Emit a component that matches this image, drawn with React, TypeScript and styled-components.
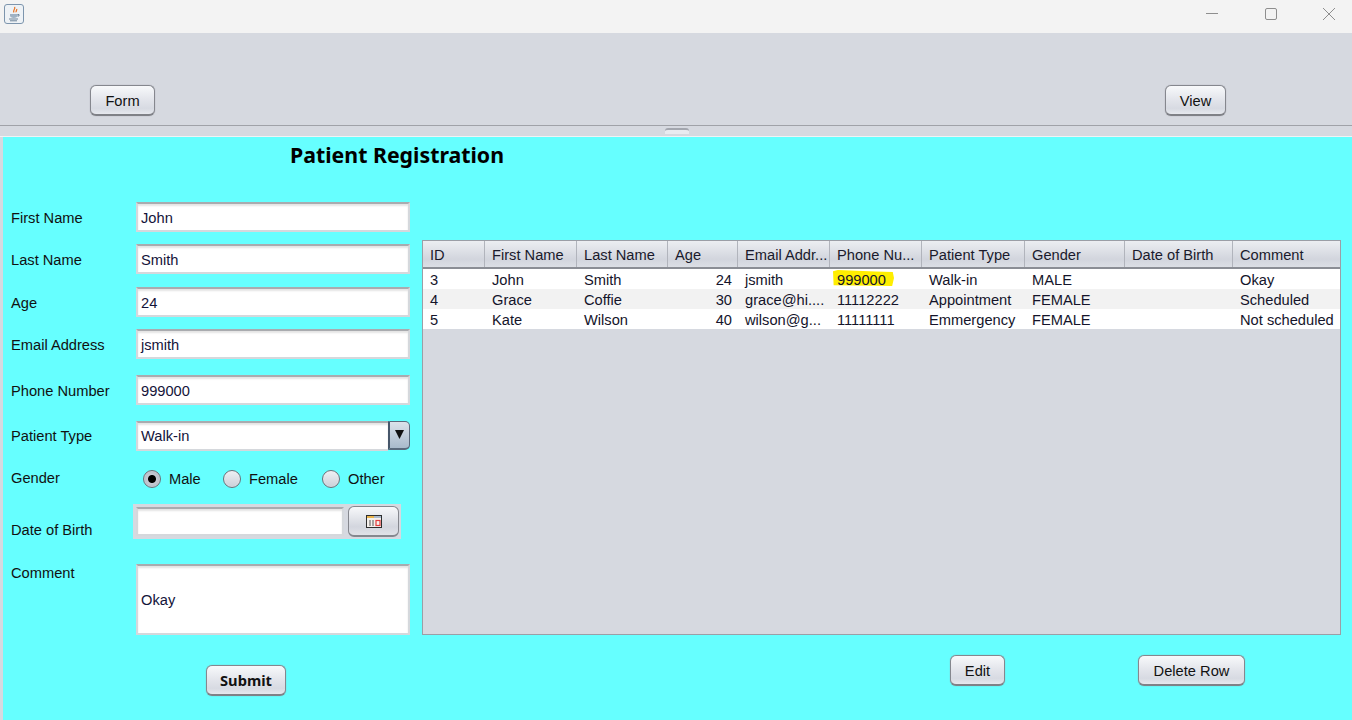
import React from 'react';
import styled, { createGlobalStyle } from 'styled-components';

const GlobalStyle = createGlobalStyle`
  html, body {
    margin: 0;
    padding: 0;
    background: #d6d9e0;
    overflow: hidden;
  }
  * {
    box-sizing: border-box;
  }
`;

const Frame = styled.div`
  width: 1352px;
  height: 720px;
  display: flex;
  flex-direction: column;
  overflow: hidden;
  font-family: "Liberation Sans", Arial, sans-serif;
  font-size: 14.67px;
  color: #111;
`;

const TitleBar = styled.div`
  height: 33px;
  background: #f3f3f3;
  display: flex;
  align-items: flex-start;
  justify-content: space-between;
  padding: 4px 17px 0 4px;
`;

const WindowControls = styled.div`
  display: flex;
  gap: 46.5px;
  padding-top: 4px;
`;

const Toolbar = styled.div`
  height: 93px;
  background: #d6d9e0;
  display: flex;
  justify-content: space-between;
  align-items: flex-start;
  padding: 52px 126px 0 90px;
  border-bottom: 1px solid #a0a2a8;
`;

const Splitter = styled.div`
  height: 11px;
  background: #d6d9e0;
  display: flex;
  justify-content: center;
  padding: 2px 0 0 2px;
  border-bottom: 1px solid #f1f2f5;
`;

const Grip = styled.div`
  width: 24px;
  height: 6px;
  border-radius: 3px 3px 0 0;
  border-top: 2px solid #a3a6ae;
  background: #e9ebf0;
`;

const Panel = styled.div`
  flex: 1;
  margin-left: 3px;
  background: #66ffff;
  display: flex;
  flex-direction: column;
`;

const Heading = styled.div`
  height: 65px;
  padding: 3px 0 0 287px;
  font-family: "Noto Sans", Tahoma, sans-serif;
  font-size: 21.3px;
  font-weight: 700;
  line-height: 29px;
  color: #000;
`;

const Columns = styled.div`
  display: flex;
`;

const FormColumn = styled.div`
  width: 419px;
  padding-left: 8px;
`;

const FormGrid = styled.div`
  display: grid;
  grid-template-columns: 125px 274px;
  grid-template-rows: 42px 43px 42px 46px 46px 43px 40px 60px 71px;
`;

const Label = styled.div<{ $top?: number }>`
  height: 30px;
  line-height: 32px;
  margin-top: ${(p) => p.$top ?? 0}px;
`;

const Field = styled.div`
  height: 30px;
  background: #fff;
  border: 2px solid #d5d8dc;
  border-top: 2px solid #a9abaf;
  box-shadow: inset 0 2px 2px #e4e4e4;
  padding-left: 3px;
  line-height: 28px;
  color: #14143a;
`;

const Combo = styled.div`
  height: 30px;
  display: flex;
`;

const ComboText = styled(Field)`
  flex: 1;
  border-right: none;
  line-height: 26px;
`;

const ComboArrow = styled.div`
  width: 22px;
  height: 29px;
  border: 1px solid #5a6a7c;
  border-left: 2px solid #46566a;
  border-bottom-width: 2px;
  border-radius: 0 5px 5px 0;
  background: linear-gradient(#dbe2ea, #a9bacb);
  display: flex;
  align-items: center;
  justify-content: center;
  padding-bottom: 2px;
`;

const RadioGroup = styled.div`
  height: 30px;
  display: flex;
  align-items: center;
  padding-left: 7px;
`;

const RadioItem = styled.div<{ $width: number }>`
  width: ${(p) => p.$width}px;
  display: flex;
  align-items: center;
  gap: 8px;
`;

const RadioCircle = styled.span<{ $checked?: boolean }>`
  width: 18px;
  height: 18px;
  border-radius: 50%;
  border: 1px solid #6c6f78;
  background: ${(p) =>
    p.$checked
      ? 'radial-gradient(circle, #000 0 3.5px, #c6cad4 4.5px, #aab0bc 100%)'
      : 'linear-gradient(#eef0f4, #ccd0d9)'};
  box-shadow: inset 0 0 1px #fff;
`;

const DatePanel = styled.div`
  width: 268px;
  height: 35px;
  margin-left: -3px;
  background: #d6d9e0;
  display: flex;
  align-items: center;
  gap: 4px;
  padding-left: 3px;
`;

const DateInput = styled(Field)`
  width: 208px;
  height: 29px;
`;

const CalendarButton = styled.div`
  width: 51px;
  height: 31px;
  border: 1px solid #85878e;
  border-bottom-width: 2px;
  border-radius: 6px;
  background: linear-gradient(#f7f8fa, #d3d6de 70%, #e0e2e8);
  display: flex;
  align-items: center;
  justify-content: center;
`;

const CommentBox = styled(Field)`
  height: 71px;
  line-height: 69px;
`;

const Button = styled.div<{ $width: number; $bold?: boolean; $left?: number }>`
  width: ${(p) => p.$width}px;
  height: 31px;
  margin-left: ${(p) => p.$left ?? 0}px;
  padding-top: ${(p) => (p.$bold ? 0 : 1)}px;
  border: 1px solid #85878e;
  border-bottom: 2px solid #7f8187;
  border-radius: 6px;
  box-shadow: 0 0 1px #8f9196;
  background: linear-gradient(#f8f9fb, #e4e6ec 45%, #d7dae2 80%, #e6e8ee);
  display: flex;
  align-items: center;
  justify-content: center;
  color: #111;
  font-family: ${(p) => (p.$bold ? '"Noto Sans", Tahoma, sans-serif' : 'inherit')};
  font-weight: ${(p) => (p.$bold ? 700 : 400)};
`;

const SubmitRow = styled.div`
  padding: 30px 0 0 195px;
`;

const TableColumn = styled.div`
  width: 919px;
  margin-top: 38px;
`;

const TableBox = styled.div`
  height: 395px;
  background: #d6d9e0;
  border: 1px solid #9b9ea6;
`;

const COLUMNS = '62px 92px 91px 70px 92px 92px 103px 100px 108px 107px';

const HeaderRow = styled.div`
  height: 28px;
  display: grid;
  grid-template-columns: ${COLUMNS};
  background: linear-gradient(#eceef2, #d2d5dd 70%, #dcdfe5);
  border-bottom: 2px solid #8b8e95;
`;

const HeaderCell = styled.div`
  padding-left: 7px;
  line-height: 28px;
  border-right: 1px solid #b1b4bc;
  white-space: nowrap;
  overflow: hidden;
  color: #1a1a2c;
  &:last-child {
    border-right: none;
  }
`;

const Row = styled.div<{ $alt?: boolean }>`
  height: 20px;
  display: grid;
  grid-template-columns: ${COLUMNS};
  background: ${(p) => (p.$alt ? '#f2f2f2' : '#fff')};
`;

const Cell = styled.div<{ $right?: boolean }>`
  position: relative;
  padding: 0 6px 0 7px;
  line-height: 23px;
  white-space: nowrap;
  overflow: hidden;
  text-align: ${(p) => (p.$right ? 'right' : 'left')};
  color: #14142a;
`;

const Highlight = styled.span`
  position: absolute;
  left: 3px;
  top: 1px;
  width: 61px;
  height: 16px;
  background: #ffee00;
  clip-path: polygon(0 8%, 8% 0, 70% 10%, 98% 12%, 100% 50%, 97% 100%, 1% 95%);
`;

const CellText = styled.span`
  position: relative;
`;

const TableActions = styled.div`
  display: flex;
  padding-top: 20px;
`;

const JavaIcon = () => (
  <svg width="20" height="20" viewBox="0 0 20 20">
    <rect x="0.5" y="0.5" width="19" height="19" rx="2.5" fill="#eef2f6" stroke="#7d95ad" />
    <path d="M10.500 3c1.500 2-2 3-.6 5.500M12.600 5c.6 1.200-1 2-.4 3.200" fill="none" stroke="#e8772a" strokeWidth="1.300" />
    <path d="M6 10h7.500v1.500c0 1.600-1.400 2.500-3.700 2.500S6 13.100 6 11.500z" fill="#9fb2c4" />
    <path d="M13.500 10.500h1.500v1.500h-1.500M5 15h9M6 16.800h7" fill="none" stroke="#6d8499" strokeWidth="1" />
  </svg>
);

const Minimize = () => (
  <svg width="12" height="12" viewBox="0 0 12 12">
    <path d="M0 5.500h12" stroke="#8e8e8e" strokeWidth="1" />
  </svg>
);

const Maximize = () => (
  <svg width="12" height="12" viewBox="0 0 12 12">
    <rect x="0.500" y="0.500" width="11" height="11" rx="1.500" fill="none" stroke="#8e8e8e" strokeWidth="1" />
  </svg>
);

const Close = () => (
  <svg width="12" height="12" viewBox="0 0 12 12">
    <path d="M0 0l12 12M12 0L0 12" stroke="#8e8e8e" strokeWidth="1" />
  </svg>
);

const ArrowDown = () => (
  <svg width="9" height="9" viewBox="0 0 9 9">
    <path d="M0 0h9L4.500 9z" fill="#111" />
  </svg>
);

const CalendarIcon = () => (
  <svg width="16" height="13" viewBox="0 0 16 13">
    <rect x="0" y="0" width="16" height="13" fill="#2e2e2e" />
    <rect x="1" y="1" width="7" height="2" fill="#e9b44c" />
    <rect x="8" y="1" width="7" height="2" fill="#a9b8cc" />
    <rect x="1" y="3" width="14" height="9" fill="#f4f0ec" />
    <path d="M4 5v6M7 5v6" stroke="#555" strokeWidth="1" />
    <rect x="10" y="5.500" width="4" height="5" fill="none" stroke="#e23b3b" strokeWidth="1.200" />
  </svg>
);

const rows = [
  ['3', 'John', 'Smith', '24', 'jsmith', '999000', 'Walk-in', 'MALE', '', 'Okay'],
  ['4', 'Grace', 'Coffie', '30', 'grace@hi....', '11112222', 'Appointment', 'FEMALE', '', 'Scheduled'],
  ['5', 'Kate', 'Wilson', '40', 'wilson@g...', '11111111', 'Emmergency', 'FEMALE', '', 'Not scheduled'],
];

const headers = ['ID', 'First Name', 'Last Name', 'Age', 'Email Addr...', 'Phone Nu...', 'Patient Type', 'Gender', 'Date of Birth', 'Comment'];

const App: React.FC = () => {
  return (
    <Frame>
      <GlobalStyle />
      <TitleBar>
        <JavaIcon />
        <WindowControls>
          <Minimize />
          <Maximize />
          <Close />
        </WindowControls>
      </TitleBar>
      <Toolbar>
        <Button $width={65}>Form</Button>
        <Button $width={61}>View</Button>
      </Toolbar>
      <Splitter>
        <Grip />
      </Splitter>
      <Panel>
        <Heading>Patient Registration</Heading>
        <Columns>
          <FormColumn>
            <FormGrid>
              <Label>First Name</Label>
              <Field>John</Field>
              <Label>Last Name</Label>
              <Field>Smith</Field>
              <Label>Age</Label>
              <Field>24</Field>
              <Label>Email Address</Label>
              <Field>jsmith</Field>
              <Label>Phone Number</Label>
              <Field>999000</Field>
              <Label $top={-1}>Patient Type</Label>
              <Combo>
                <ComboText>Walk-in</ComboText>
                <ComboArrow>
                  <ArrowDown />
                </ComboArrow>
              </Combo>
              <Label $top={-2}>Gender</Label>
              <RadioGroup>
                <RadioItem $width={80}>
                  <RadioCircle $checked />
                  Male
                </RadioItem>
                <RadioItem $width={99}>
                  <RadioCircle />
                  Female
                </RadioItem>
                <RadioItem $width={70}>
                  <RadioCircle />
                  Other
                </RadioItem>
              </RadioGroup>
              <Label $top={10}>Date of Birth</Label>
              <DatePanel>
                <DateInput />
                <CalendarButton>
                  <CalendarIcon />
                </CalendarButton>
              </DatePanel>
              <Label $top={-7}>Comment</Label>
              <CommentBox>Okay</CommentBox>
            </FormGrid>
            <SubmitRow>
              <Button $width={80} $bold>Submit</Button>
            </SubmitRow>
          </FormColumn>
          <TableColumn>
            <TableBox>
              <HeaderRow>
                {headers.map((h) => (
                  <HeaderCell key={h}>{h}</HeaderCell>
                ))}
              </HeaderRow>
              {rows.map((row, i) => (
                <Row key={row[0]} $alt={i === 1}>
                  {row.map((value, c) => (
                    <Cell key={c} $right={c === 3}>
                      {i === 0 && c === 5 ? <Highlight /> : null}
                      <CellText>{value}</CellText>
                    </Cell>
                  ))}
                </Row>
              ))}
            </TableBox>
            <TableActions>
              <Button $width={55} $left={528}>Edit</Button>
              <Button $width={107} $left={133}>Delete Row</Button>
            </TableActions>
          </TableColumn>
        </Columns>
      </Panel>
    </Frame>
  );
};

export default App;
